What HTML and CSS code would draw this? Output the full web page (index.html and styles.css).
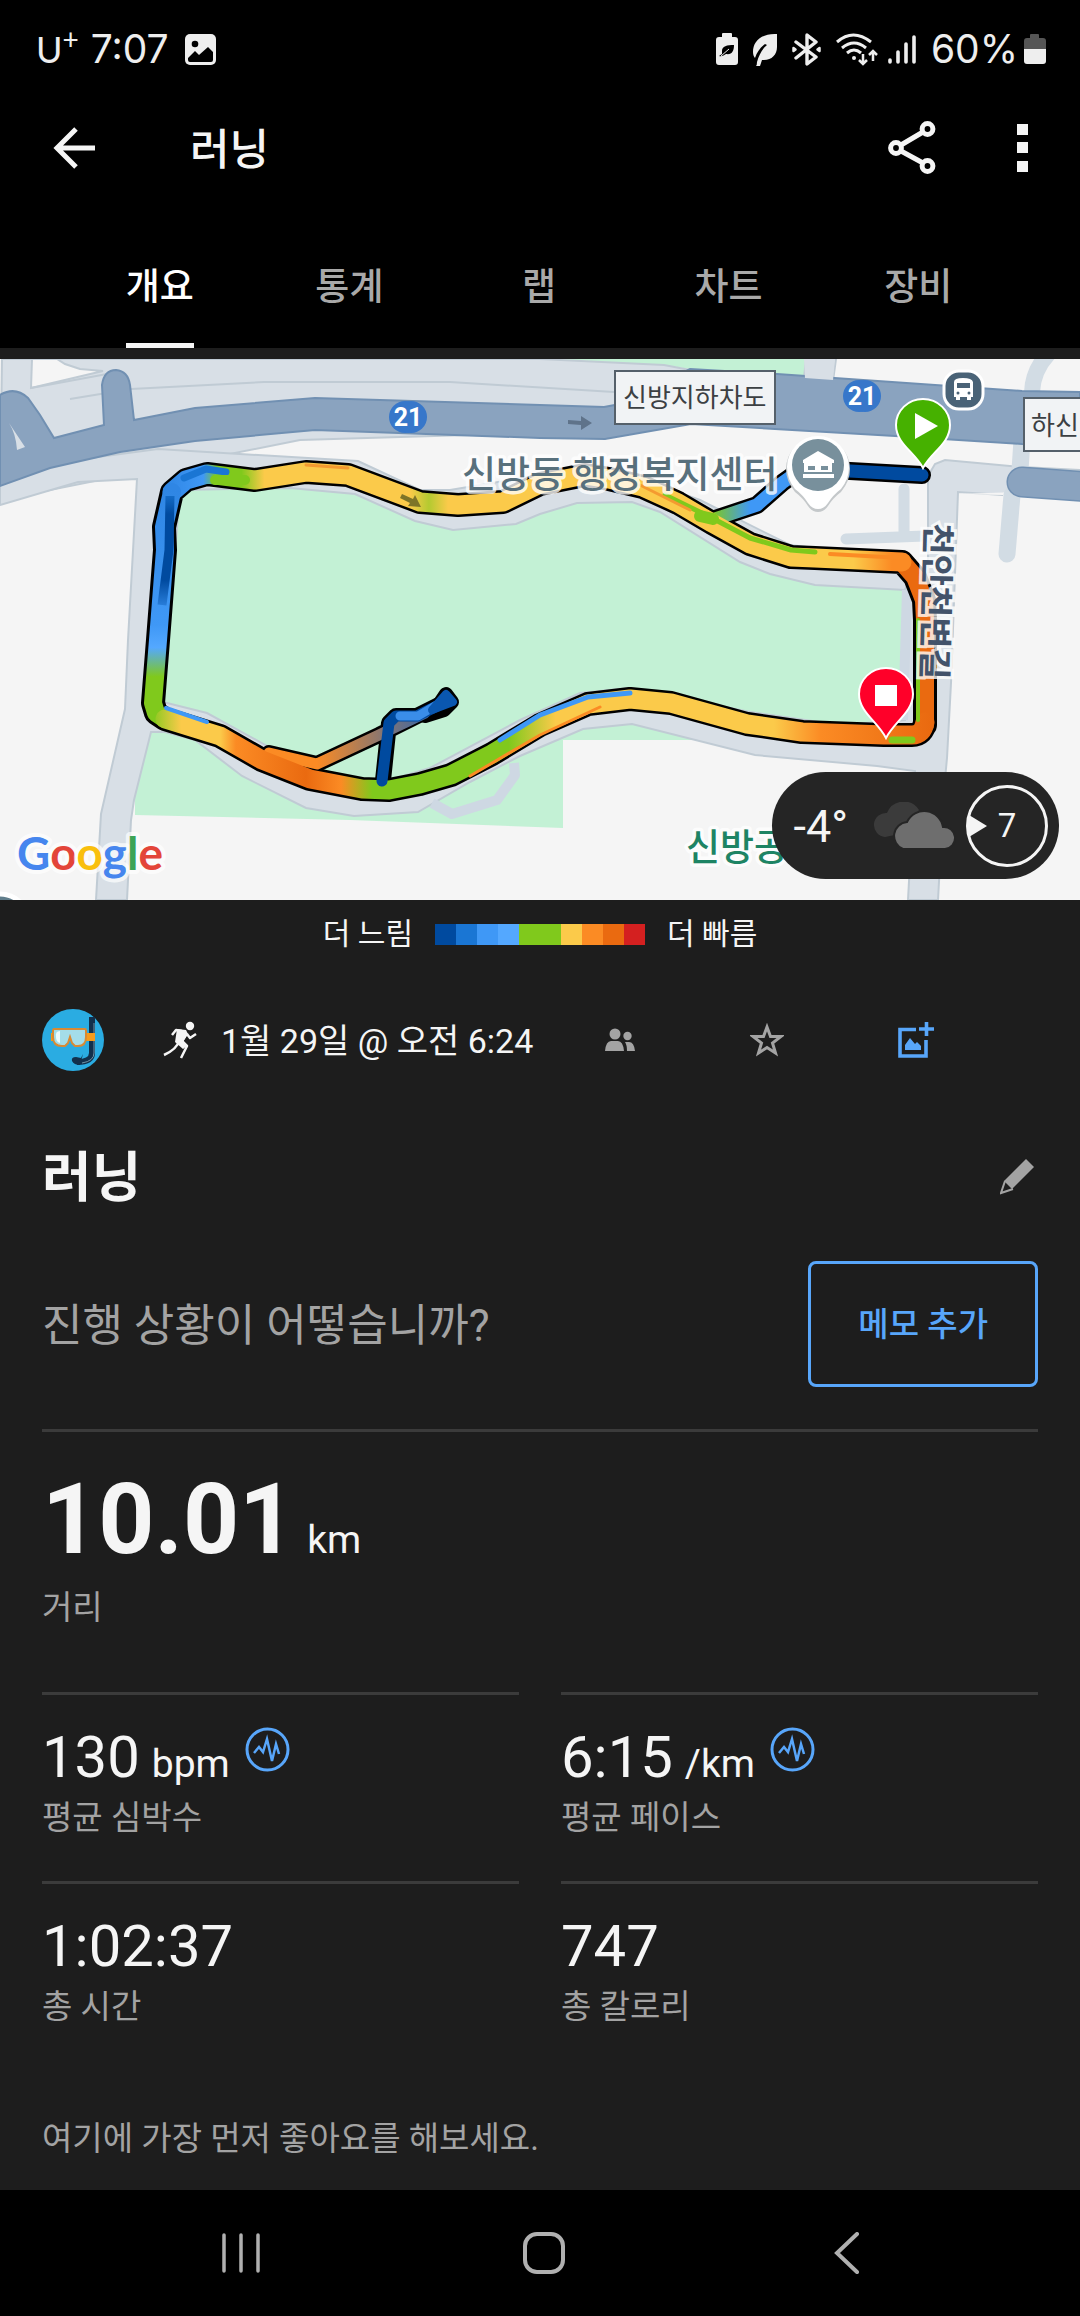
FILE: index.html
```html
<!DOCTYPE html>
<html lang="ko">
<head>
    <meta charset="UTF-8">
    <meta name="viewport" content="width=device-width, initial-scale=1.0">
    <title>러닝</title>
    <link rel="stylesheet" href="styles.css">
</head>
<body>
    <div class="screen">
        <div class="status-bar">
            <div class="status-left">
                <span class="carrier">U<sup>+</sup></span>
                <span>7:07</span>
                <svg class="status-photo" width="31" height="31" viewBox="0 0 31 31">
                    <rect width="31" height="31" rx="5" fill="#eee"/>
                    <circle cx="10" cy="10" r="3.3" fill="#000"/>
                    <path d="M3 24l7-7 4 4 9-8 5 5v8q0 2-2 2H5q-2 0-2-2z" fill="#000"/>
                </svg>
            </div>
            <div class="status-right">
                <svg width="22" height="33" viewBox="0 0 22 33">
                    <path d="M6 4V1q0-1 1-1h8q1 0 1 1v3h3q3 0 3 3v22q0 3-3 3H3q-3 0-3-3V7q0-3 3-3z" fill="#eee"/>
                    <path d="M18 12c-7 0-12 1-12 6l0 3-3 2c3 1 5-1 7-2 6 1 8-3 8-9z" fill="#000"/>
                    <path d="M5 23l8-7" stroke="#eee"/>
                </svg>
                <svg width="24" height="33" viewBox="0 0 24 33">
                    <path d="M24 1C9 0 0 8 0 19c0 3 1 5 2 6 2-6 5-10 10-14l2 1c-5 4-8 10-10 17q0 3-1 4l4 0 2-6c9 1 15-5 15-13z" fill="#eee"/>
                </svg>
                <svg width="29" height="33" viewBox="0 0 29 33" fill="none" stroke="#eee" stroke-width="3.400" stroke-linejoin="round" stroke-linecap="round">
                    <path d="M4 9l20 15-9 7V2l9 7L4 25"/>
                    <path d="M1.500 15l2 1.500-2 1.500zM27.500 15l-2 1.500 2 1.500z" stroke-width="2.500"/>
                </svg>
                <svg class="wifi" width="42" height="33" viewBox="0 0 42 33" fill="none" stroke="#eee" stroke-width="3">
                    <path d="M1 9Q17-5 35 9M6 15q12-10 24 0M11 20q7-6 14 0"/>
                    <circle cx="18" cy="25" r="2" fill="#eee" stroke="none"/>
                    <path d="M27 21v9M23 27l4 4 4-4M37 28v-9M33 22l4-4 4 4" stroke-width="2.500"/>
                </svg>
                <svg width="28" height="33" viewBox="0 0 28 33" stroke="#eee" stroke-width="3.600" stroke-linecap="round">
                    <path d="M2 27v2M10 19v10M18 11v18M26 4v25"/>
                </svg>
                <span class="percent">60%</span>
                <svg width="22" height="33" viewBox="0 0 22 33">
                    <path d="M6 5V2q0-1 1-1h7q1 0 1 1v3h4q3 0 3 3v8H0V8q0-3 3-3z" fill="#555"/>
                    <path d="M0 16h22v12q0 3-3 3H3q-3 0-3-3z" fill="#eee"/>
                </svg>
            </div>
        </div>

        <header class="app-bar">
            <button class="icon-btn" aria-label="뒤로">
                <svg width="42" height="42" viewBox="0 0 42 42" fill="none" stroke="#f5f5f5" stroke-width="5">
                    <path d="M23 2L4 21l19 19M4 21h38"/>
                </svg>
            </button>
            <h1>러닝</h1>
            <button class="icon-btn share" aria-label="공유">
                <svg width="48" height="54" viewBox="0 0 48 54" fill="none" stroke="#f5f5f5" stroke-width="5">
                    <circle cx="8" cy="27" r="5.400"/>
                    <circle cx="39.500" cy="8" r="5.400"/>
                    <circle cx="39.500" cy="45" r="5.400"/>
                    <path d="M13 24l22-13M13 30l22 12"/>
                </svg>
            </button>
            <button class="icon-btn" aria-label="더보기">
                <svg width="12" height="48" viewBox="0 0 12 48" fill="#f5f5f5">
                    <path d="M0 0h11v11H0zM0 18h11v11H0zM0 37h11v11H0z"/>
                </svg>
            </button>
        </header>

        <nav class="tabs">
            <a href="#" class="tab active">개요</a>
            <a href="#" class="tab">통계</a>
            <a href="#" class="tab">랩</a>
            <a href="#" class="tab">차트</a>
            <a href="#" class="tab">장비</a>
        </nav>

        <div class="map">
            <svg class="map-canvas" viewBox="0 359 1080 541">
                <defs>
                    <linearGradient id="gTop" gradientUnits="userSpaceOnUse" x1="165" y1="0" x2="930" y2="0">
                        <stop offset="0" stop-color="#2f86e4"/>
                        <stop offset="0.050" stop-color="#3f98f6"/>
                        <stop offset="0.070" stop-color="#80c91c"/>
                        <stop offset="0.100" stop-color="#80c91c"/>
                        <stop offset="0.130" stop-color="#fbca4a"/>
                        <stop offset="0.320" stop-color="#fbca4a"/>
                        <stop offset="0.345" stop-color="#b4ca30"/>
                        <stop offset="0.370" stop-color="#fbca4a"/>
                        <stop offset="0.900" stop-color="#fbca4a"/>
                        <stop offset="0.950" stop-color="#fb8b24"/>
                        <stop offset="1" stop-color="#fb8b24"/>
                    </linearGradient>
                    <linearGradient id="gLeft" gradientUnits="userSpaceOnUse" x1="0" y1="490" x2="0" y2="715">
                        <stop offset="0" stop-color="#2f86e4"/>
                        <stop offset="0.600" stop-color="#3f98f6"/>
                        <stop offset="0.700" stop-color="#54a8ff"/>
                        <stop offset="0.830" stop-color="#80c91c"/>
                        <stop offset="1" stop-color="#80c91c"/>
                    </linearGradient>
                    <linearGradient id="gInner" gradientUnits="userSpaceOnUse" x1="0" y1="490" x2="0" y2="610">
                        <stop offset="0" stop-color="#1a76d4"/>
                        <stop offset="0.200" stop-color="#004a9f"/>
                        <stop offset="0.750" stop-color="#004a9f"/>
                        <stop offset="1" stop-color="#2f86e4"/>
                    </linearGradient>
                    <linearGradient id="gBottom" gradientUnits="userSpaceOnUse" x1="150" y1="0" x2="930" y2="0">
                        <stop offset="0" stop-color="#80c91c"/>
                        <stop offset="0.040" stop-color="#fbca4a"/>
                        <stop offset="0.090" stop-color="#fbca4a"/>
                        <stop offset="0.110" stop-color="#fb8b24"/>
                        <stop offset="0.200" stop-color="#ea6a10"/>
                        <stop offset="0.245" stop-color="#fb8b24"/>
                        <stop offset="0.285" stop-color="#80c91c"/>
                        <stop offset="0.460" stop-color="#80c91c"/>
                        <stop offset="0.520" stop-color="#fbca4a"/>
                        <stop offset="0.800" stop-color="#fbca4a"/>
                        <stop offset="0.860" stop-color="#fb8b24"/>
                        <stop offset="1" stop-color="#ea6a10"/>
                    </linearGradient>
                    <linearGradient id="gStart" gradientUnits="userSpaceOnUse" x1="712" y1="0" x2="840" y2="0">
                        <stop offset="0" stop-color="#80c91c"/>
                        <stop offset="0.300" stop-color="#3f98f6"/>
                        <stop offset="0.600" stop-color="#3f98f6"/>
                        <stop offset="1" stop-color="#004a9f"/>
                    </linearGradient>
                    <linearGradient id="gSpur" gradientUnits="userSpaceOnUse" x1="317" y1="0" x2="420" y2="0">
                        <stop offset="0" stop-color="#fb8b24"/>
                        <stop offset="1" stop-color="#46699c"/>
                    </linearGradient>
                </defs>
                <rect y="359" width="1080" height="541" fill="#f5f5f5"/>

                <!-- park -->
                <path d="M555 359H806V380L690 369 664 365Z" fill="#c3f1d5"/>
                <path d="M165 484L300 480 450 520 640 490 790 570 935 585V740H563V828L350 820 135 815V732L150 650Z" fill="#c3f1d5"/>

                <!-- local roads -->
                <g fill="#d8dfe6" stroke="#c0cbd4" stroke-width="2">
                    <path d="M2 359H540L664 365 690 370 640 430 300 440 0 500Z"/>
                    <path d="M32 359H57L65 364 80 369 103 371 31 388Z" fill="#f5f5f5"/>
                    <path d="M0 505L78 482 137 479 128 640 125 709 101 814 96 900H127L131 820 134 800 151 732 165 732 195 740 242 776 306 808 354 816 418 812 470 782 520 756 583 729 632 724 755 755 877 766 915 771 908 900H938L944 790 947 758 951 683 958 492 1003 495 1080 500V470L1022 467 945 460 935 464 928 476 928 600 905 590V720L840 725 750 712 630 688 580 693 520 720 430 768 380 783 310 770 260 742 207 713 163 702 180 490 290 488 355 494 415 521 453 530 516 524 540 514 577 503 632 502 660 512 740 562 770 574 815 585 905 590 915 560 790 545 700 500 600 465 450 490 420 490 358 461 158 449 0 470Z"/>
                    <path d="M806 359H836L833 381 804 378Z"/>
                </g>
                <path d="M958 494L1003 495V900H1080V500L1020 492Z" fill="#f5f5f5"/>
                <path d="M70 399L131 389 264 382 450 382 614 392M31 388L118 372" fill="none" stroke="#c0cbd4" stroke-width="2"/>
                <g fill="none" stroke="#d2dce4" stroke-linecap="round" stroke-linejoin="round">
                    <path d="M904 489V532M846 539L925 536" stroke-width="11"/>
                    <path d="M1012 495L1007 554M1022 440L1020 470" stroke-width="17"/>
                    <path d="M1049 353Q1033 370 1032 392" stroke-width="16"/>
                    <path d="M907 590L903 720M432 803L452 814 497 800 515 775 514 763" stroke="#ced8e3" stroke-width="10" stroke-linecap="butt"/>
                </g>

                <!-- route 21 -->
                <path d="M0 395Q15 386 28 398L40 415 54 438 104 425 102 385Q104 370 116 370 128 371 130 385L134 420 195 408 315 398 540 405 604 407 620 404 690 369 777 374 1022 391 1080 392V446L1022 444 895 436 691 424 605 439 540 438 315 430 195 441 120 452 50 468 0 486Z" fill="#8aa3bf" stroke="#7190b2" stroke-width="2"/>
                <path d="M9 423L25 447 17 450Q16 434 9 423Z" fill="#d8dfe6"/>
                <path d="M804 359H835L833 380 805 378Z" fill="#d8dfe6"/>
                <path d="M1022 482L1090 487" stroke="#7190b2" stroke-width="31" stroke-linecap="round"/>
                <path d="M1022 482L1090 487" stroke="#8aa3bf" stroke-width="28" stroke-linecap="round"/>
                <path d="M568 420L581 421V416L592 423 581 430V425L568 424Z" fill="#5f738a"/>

                <!-- recorded track -->
                <g fill="none" stroke-linejoin="round" stroke-linecap="round">
                    <path d="M922 475L850 471 803 468 782 483 757 505 712 520" stroke="#000" stroke-width="18"/>
                    <path d="M269 753L317 764 379 735 445 702 417 716 396 716 389 723 382 790" stroke="#000" stroke-width="16"/>
                    <path d="M425 716L440 703 446 694 452 702 444 710Z" stroke="#000" stroke-width="14"/>
                    <path d="M925 725V620L924 600 915 577 902 562 815 558 791 557 750 544 712 523 678 503 643 487 609 479 585 475 540 484 503 502 458 505 420 502 348 475 306 472 255 480 207 474 186 480 172 492 164 527 165 550 158 640 153 703 156 713 165 719 220 736 262 760 310 779 362 789 389 790 420 784 451 775 492 754 540 725 588 704 630 699 671 703 747 724 802 732 884 735 912 735Q923 735 925 722" stroke="#000" stroke-width="24"/>
                    <path d="M922 475L850 471 803 468 782 483 757 505 712 520" stroke="url(#gStart)" stroke-width="13"/>
                    <path d="M269 753L317 764 379 735 425 713" stroke="url(#gSpur)" stroke-width="11"/>
                    <path d="M925 725V620L924 600 915 577 902 562" stroke="#ea6a10" stroke-width="18"/>
                    <path d="M902 562L815 558 791 557 750 544 712 523 678 503 643 487 609 479 585 475 540 484 503 502 458 505 420 502 348 475 306 472 255 480 207 474 186 480 172 492" stroke="url(#gTop)" stroke-width="19"/>
                    <path d="M172 492L164 527 165 550 158 640 153 703 156 713 165 719" stroke="url(#gLeft)" stroke-width="18"/>
                    <path d="M165 719L220 736 262 760 310 779 362 789 389 790 420 784 451 775 492 754 540 725 588 704 630 699 671 703 747 724 802 732 884 735 912 735Q923 735 925 722" stroke="url(#gBottom)" stroke-width="19"/>
                    <!-- other laps -->
                    <path d="M170 496L169 550 162 605" stroke="url(#gInner)" stroke-width="9" stroke-linecap="butt"/>
                    <path d="M184 478L206 469 226 472" stroke="#1a76d4" stroke-width="7"/>
                    <path d="M215 480L245 480" stroke="#80c91c" stroke-width="10"/>
                    <path d="M665 495L710 517 750 538 791 550 815 552" stroke="#80c91c" stroke-width="5"/>
                    <path d="M700 516L713 519" stroke="#80c91c" stroke-width="12"/>
                    <path d="M830 554L902 558" stroke="#fb8b24" stroke-width="4"/>
                    <path d="M640 485L690 510M306 465L348 468" stroke="#f49a30" stroke-width="3"/>
                    <path d="M166 708L207 722" stroke="#3f98f6" stroke-width="4"/>
                    <path d="M500 740L540 715 588 697 630 693" stroke="#3f98f6" stroke-width="5"/>
                    <path d="M470 776L540 735 600 707" stroke="#fb8b24" stroke-width="3"/>
                    <path d="M918 720V620" stroke="#80c91c" stroke-width="4"/>
                    <path d="M892 740H912" stroke="#80c91c" stroke-width="7"/>
                    <path d="M445 702L417 716 396 716 389 723 382 781" stroke="#004a9f" stroke-width="11"/>
                    <path d="M400 716L418 716 440 703" stroke="#3a8de9" stroke-width="9"/>
                    <path d="M432 710L446 694 453 702Z" fill="#0a57b0" stroke="#0a57b0" stroke-width="8"/>
                </g>
                <path d="M402 494L413 499 415 495 421 507 408 506 410 503 400 498Z" fill="#7d7428"/>

                <!-- labels -->
                <g fill="#f1f3f5" stroke="#55606a" stroke-width="2">
                    <rect x="615" y="371" width="160" height="53"/>
                    <rect x="1024" y="398" width="80" height="53"/>
                </g>
                <text class="tunnel" x="623" y="407">신방지하차도</text>
                <text class="tunnel" x="1031" y="435">하신</text>
                <circle cx="405" cy="417" r="16" fill="#3777ca"/><circle cx="411" cy="417" r="16" fill="#3777ca"/>
                <circle cx="859" cy="396" r="16" fill="#3777ca"/><circle cx="865" cy="396" r="16" fill="#3777ca"/>
                <text class="shield" x="408" y="426">21</text>
                <text class="shield" x="862" y="405">21</text>
                <text class="poi" x="462" y="488">신방동 행정복지센터</text>
                <text class="poi park" x="686" y="861">신방공원</text>
                <text class="street" transform="translate(926 523) rotate(91.500)">천안천변길</text>

                <!-- civic centre pin -->
                <path d="M818 512Q812 512 808 506 803 498 795 492 786 481 786 469A32 32 0 0 1 850 469Q850 481 841 492 833 498 828 506 824 512 818 512Z" fill="#c4c8ca"/>
                <path d="M818 509Q812 509 808 503 803 495 795 489 787 479 787 467A31 31 0 0 1 849 467Q849 479 841 489 833 495 828 503 824 509 818 509Z" fill="#fff"/>
                <circle cx="818" cy="465" r="26" fill="#78909c"/>
                <path d="M803 460L818 451 834 460V463H803ZM804 463H832V472H804ZM803 474H834V478H803Z" fill="#fff"/>
                <path d="M808 466H815V470H808ZM821 466H828V470H821Z" fill="#78909c"/>

                <!-- bus stop -->
                <rect x="944" y="371" width="39" height="38" rx="15" fill="#4a6377" stroke="#fff" stroke-width="3"/>
                <path d="M954 382Q954 378 963 378T973 382V397H971V400H967V397H960V400H956V397H954Z" fill="#fff"/>
                <path d="M957 383H970V388H957Z" fill="#4a6377"/>
                <circle cx="958" cy="393" r="1.500" fill="#4a6377"/><circle cx="969" cy="393" r="1.500" fill="#4a6377"/>

                <!-- start and finish -->
                <path d="M923 468C915 452 896 444 896 425A27 26 0 0 1 950 425C950 444 931 452 923 468Z" fill="#46b100" stroke="#fff" stroke-width="2"/>
                <path d="M915 413L938 426 915 439Z" fill="#fff"/>
                <path d="M886 738C878 722 859 712 859 694A27 26 0 0 1 913 694C913 712 894 722 886 738Z" fill="#ff0029" stroke="#fff" stroke-width="2"/>
                <path d="M875 685H897V706H875Z" fill="#fff"/>

                <circle cx="0" cy="923" r="29" fill="#607d8b" stroke="#fff" stroke-width="5"/>
                <text class="google" x="17" y="870"><tspan fill="#4686ee">G</tspan><tspan fill="#e34539">o</tspan><tspan fill="#f9bf0d">o</tspan><tspan fill="#4686ee">g</tspan><tspan fill="#3da456">l</tspan><tspan fill="#e34539">e</tspan></text>
            </svg>

            <div class="weather">
                <span class="temp">-4°</span>
                <svg width="83" height="48" viewBox="0 0 83 48">
                    <path d="M12 35A12 12 0 0 1 14 11 18 18 0 0 1 46 8L36 30Z" fill="#3b3b3b"/>
                    <path d="M30 47A14 14 0 0 1 34 20 19 19 0 0 1 70 25 11 11 0 0 1 72 47Z" fill="#6e6e6e" stroke="#252525" stroke-width="2"/>
                </svg>
                <span class="wind">
                    <svg width="82" height="84" viewBox="0 0 82 84">
                        <circle cx="41" cy="42" r="39.500" fill="none" stroke="#f5f5f5" stroke-width="3"/>
                        <path d="M3 31L21 42 3 53Z" fill="#f5f5f5"/>
                    </svg>
                    <span class="wind-speed">7</span>
                </span>
            </div>
        </div>

        <div class="legend">
            <span>더 느림</span>
            <span class="scale">
                <i class="pace-1"></i><i class="pace-2"></i><i class="pace-3"></i><i class="pace-4"></i><i class="pace-5"></i><i class="pace-5"></i><i class="pace-6"></i><i class="pace-7"></i><i class="pace-8"></i><i class="pace-9"></i>
            </span>
            <span>더 빠름</span>
        </div>

        <main class="content">
            <div class="info">
                <svg class="avatar" width="62" height="62" viewBox="0 0 62 62">
                    <circle cx="31" cy="31" r="31" fill="#2aace2"/>
                    <path d="M50 8v36q0 9-15 9" fill="none" stroke="#12304c" stroke-width="6"/>
                    <path d="M52 14v30q0 8-12 10" fill="none" stroke="#7195a8"/>
                    <path d="M41 45l-2 4-5-1q-5 0-4 4 2 4 8 4z" fill="#12304c"/>
                    <path d="M9 24h44v8H9z" fill="#f59b1c"/>
                    <path d="M12 20h31q1 0 1 2v6q0 9-8 9h-3l-3-3-2-6-2 6-3 3h-3q-9 0-9-9v-6q0-2 1-2z" fill="#a4dde9" stroke="#d88a34" stroke-width="2"/>
                    <path d="M18 22q-5 0-4 6 0 5 4 6z" fill="#eafcff"/>
                </svg>
                <svg class="runner" width="34" height="38" viewBox="0 0 34 38">
                    <circle cx="27" cy="5" r="4.200" fill="#f5f5f5"/>
                    <path d="M24 12L19 20 24 25 18 37M24 13l3 4 6-4M19 10l-6-1-4 5M16 20q-2 8-15 14" fill="none" stroke="#f5f5f5" stroke-width="2.500" stroke-linejoin="round"/>
                    <path d="M14 8l9 1 2 4-5 8 4 4-4 3-8-7z" fill="#f5f5f5"/>
                </svg>
                <span class="date">1월 29일 @ 오전 6:24</span>
                <button class="icon-btn people" aria-label="공개 범위">
                    <svg width="30" height="24" viewBox="0 0 30 24" fill="#a3a3a3">
                        <circle cx="10" cy="6" r="5.500"/><circle cx="22.500" cy="8" r="4.200"/>
                        <path d="M0 23Q1 13 6 13h7q5 0 6 10zM20 14h4q5 0 6 9h-8q0-6-2-9z"/>
                    </svg>
                </button>
                <button class="icon-btn star" aria-label="즐겨찾기">
                    <svg width="34" height="34" viewBox="0 0 34 34" fill="none" stroke="#a3a3a3" stroke-width="3">
                        <path d="M17 4l3.500 9.500H31l-8.500 6.500 3 10-8.500-5.500L8.500 30l3-10L3 13.500h10.500z"/>
                    </svg>
                </button>
                <button class="icon-btn" aria-label="사진 추가">
                    <svg width="36" height="36" viewBox="0 0 36 36">
                        <path d="M18 7.500H2V34H28V18" fill="none" stroke="#58a6fa" stroke-width="3.600"/>
                        <path d="M28.500 0v14M21 7h15" stroke="#58a6fa" stroke-width="3.600"/>
                        <path d="M7 28v-5l5-7 5 6 2-2 4 4v4z" fill="#58a6fa"/>
                    </svg>
                </button>
            </div>

            <div class="title-row">
                <h2>러닝</h2>
                <button class="icon-btn" aria-label="이름 편집">
                    <svg width="38" height="36" viewBox="0 0 38 36">
                        <path d="M26 0l8 8-22 22-8-8z" fill="#a3a3a3"/>
                        <path d="M5 22L1 34l12-4" fill="none" stroke="#a3a3a3" stroke-width="2"/>
                    </svg>
                </button>
            </div>

            <div class="note-row">
                <p>진행 상황이 어떻습니까?</p>
                <button class="note-btn">메모 추가</button>
            </div>

            <section class="stat distance">
                <div class="value">10.01 <span class="unit">km</span></div>
                <div class="label">거리</div>
            </section>

            <section class="stats">
                <div class="stat">
                    <div class="value">130 <span class="unit">bpm</span>
                        <svg class="pulse" width="45" height="45" viewBox="0 0 45 45" fill="none" stroke="#58a6fa">
                            <circle cx="22.500" cy="22.500" r="20.500" stroke-width="3"/>
                            <path d="M9 26l5-6 4 5 4-13 5 22 4-17 3 10" stroke-width="2.500"/>
                        </svg>
                    </div>
                    <div class="label">평균 심박수</div>
                </div>
                <div class="stat">
                    <div class="value">6:15 <span class="unit">/km</span>
                        <svg class="pulse" width="45" height="45" viewBox="0 0 45 45" fill="none" stroke="#58a6fa">
                            <circle cx="22.500" cy="22.500" r="20.500" stroke-width="3"/>
                            <path d="M9 26l5-6 4 5 4-13 5 22 4-17 3 10" stroke-width="2.500"/>
                        </svg>
                    </div>
                    <div class="label">평균 페이스</div>
                </div>
                <div class="stat">
                    <div class="value">1:02:37</div>
                    <div class="label">총 시간</div>
                </div>
                <div class="stat">
                    <div class="value">747</div>
                    <div class="label">총 칼로리</div>
                </div>
            </section>

            <p class="likes">여기에 가장 먼저 좋아요를 해보세요.</p>
        </main>

        <footer class="nav-bar">
            <button class="icon-btn" aria-label="최근 앱">
                <svg width="42" height="42" viewBox="0 0 42 42" stroke="#b0b0b0" stroke-width="3.500" stroke-linecap="round">
                    <path d="M4 3v36M21 3v36M38 3v36"/>
                </svg>
            </button>
            <button class="icon-btn" aria-label="홈">
                <svg width="42" height="42" viewBox="0 0 42 42" fill="none" stroke="#b0b0b0" stroke-width="4">
                    <rect x="2" y="2" width="38" height="38" rx="12"/>
                </svg>
            </button>
            <button class="icon-btn" aria-label="이전">
                <svg width="42" height="42" viewBox="0 0 42 42" fill="none" stroke="#b0b0b0" stroke-width="4" stroke-linecap="round">
                    <path d="M31 2L11 21l20 19"/>
                </svg>
            </button>
        </footer>
    </div>
</body>
</html>
```
FILE: styles.css
```css
* {
    box-sizing: border-box;
}
body {
    margin: 0;
    background: #1d1d1d;
    color: #f5f5f5;
    font-family: Roboto, "Noto Sans CJK KR", sans-serif;
}
h1, h2, p {
    margin: 0;
}
svg {
    display: block;
}
button {
    font-family: inherit;
    cursor: pointer;
}
.screen {
    display: flex;
    flex-direction: column;
    min-height: 100vh;
}
.icon-btn {
    background: none;
    border: 0;
    padding: 0;
}

/* status bar */
.status-bar {
    display: flex;
    justify-content: space-between;
    align-items: center;
    height: 98px;
    padding: 0 34px 0 36px;
    background: #000;
    color: #eee;
    font-family: Inter, sans-serif;
    font-size: 39px;
    line-height: 40px;
}
.status-left, .status-right {
    display: flex;
    align-items: center;
}
.status-left {
    gap: 12px;
}
.carrier {
    font-family: Lato, sans-serif;
    font-size: 36px;
}
.carrier sup {
    font-size: 28px;
    line-height: 0;
}
.status-photo {
    margin-left: 4px;
}
.status-right {
    gap: 15px;
}
.wifi {
    margin-right: -5px;
}
.percent {
    margin-right: -9px;
}

/* app bar */
.app-bar {
    display: flex;
    align-items: center;
    height: 100px;
    padding: 0 51px 0 53px;
    background: #000;
}
.app-bar h1 {
    flex: 1;
    margin-left: 95px;
    padding-top: 4px;
    font-size: 43px;
    line-height: 60px;
    font-weight: 500;
}
.share {
    margin-right: 81px;
}
.tabs {
    display: grid;
    grid-template-columns: repeat(5, 1fr);
    height: 150px;
    padding: 0 67px 0 65px;
    background: #000;
}
.tab {
    justify-self: center;
    padding-top: 64px;
    border-bottom: 5px solid transparent;
    color: #a9a9a9;
    font-size: 37px;
    font-weight: 500;
    line-height: 52px;
    text-decoration: none;
}
.tab.active {
    color: #fff;
    border-bottom-color: #f5f5f5;
}

/* map */
.map {
    position: relative;
    margin-top: 11px;
}
.map-canvas {
    width: 100%;
    height: auto;
}
.tunnel {
    font-size: 26px;
    fill: #3c4043;
}
.shield {
    font-size: 25px;
    font-weight: 700;
    fill: #fff;
    text-anchor: middle;
}
.poi {
    font-size: 37px;
    font-weight: 500;
    fill: #58707c;
    stroke: rgba(255, 255, 255, 0.8);
    stroke-width: 7px;
    stroke-linejoin: round;
    paint-order: stroke;
}
.poi.park {
    fill: #1e8464;
}
.street {
    font-size: 34px;
    font-weight: 700;
    fill: #43536a;
    stroke: rgba(255, 255, 255, 0.8);
    stroke-width: 6px;
    paint-order: stroke;
}
.google {
    font-family: Lato, sans-serif;
    font-size: 46px;
    font-weight: 700;
    stroke: rgba(255, 255, 255, 0.7);
    stroke-width: 8px;
    stroke-linejoin: round;
    paint-order: stroke;
}
.weather {
    position: absolute;
    right: 21px;
    bottom: 21px;
    display: flex;
    align-items: center;
    height: 107px;
    padding: 0 11px 0 21px;
    border-radius: 54px;
    background: #252525;
}
.temp {
    margin-right: 25px;
    padding-top: 3px;
    font-size: 45px;
    line-height: 54px;
}
.wind {
    position: relative;
    margin-left: 10px;
}
.wind-speed {
    position: absolute;
    inset: 0;
    font-size: 33px;
    line-height: 84px;
    text-align: center;
}

/* pace legend */
.legend {
    display: flex;
    justify-content: center;
    align-items: center;
    gap: 22px;
    height: 68px;
    font-size: 30px;
    line-height: 40px;
}
.scale {
    display: flex;
}
.scale i {
    width: 21px;
    height: 21px;
}
.pace-1 { background: #004a9f; }
.pace-2 { background: #1a76d4; }
.pace-3 { background: #3f98f6; }
.pace-4 { background: #54a8ff; }
.pace-5 { background: #80c91c; }
.pace-6 { background: #fbca4a; }
.pace-7 { background: #fb8b24; }
.pace-8 { background: #ea6a10; }
.pace-9 { background: #d42020; }

/* activity */
.content {
    padding: 0 42px;
}
.info {
    display: flex;
    align-items: center;
    height: 144px;
}
.runner {
    margin: 0 24px 0 59px;
}
.date {
    padding-top: 2px;
    font-size: 34px;
    line-height: 40px;
}
.people {
    margin: 0 115px 0 72px;
}
.star {
    margin-right: 114px;
}
.title-row {
    display: flex;
    justify-content: space-between;
    align-items: center;
    height: 130px;
}
h2 {
    padding-top: 4px;
    font-size: 54px;
    line-height: 60px;
    font-weight: 700;
}
.note-row {
    display: flex;
    justify-content: space-between;
    align-items: center;
    padding: 19px 0 42px;
}
.note-row p {
    padding-top: 4px;
    color: #a3a3a3;
    font-size: 44px;
    line-height: 60px;
}
.note-btn {
    padding: 41px 47px 39px;
    border: 3px solid #58a6fa;
    border-radius: 8px;
    background: none;
    color: #58a6fa;
    font-size: 33px;
    font-weight: 500;
    line-height: 40px;
}
.stats {
    display: grid;
    grid-template-columns: 1fr 1fr;
    column-gap: 42px;
}
.stat {
    padding: 32px 0 43px;
    border-top: 3px solid #3b3b3b;
}
.value {
    display: flex;
    align-items: baseline;
    gap: 12px;
    font-size: 58px;
    line-height: 60px;
}
.unit {
    font-size: 39px;
    line-height: 40px;
}
.pulse {
    align-self: flex-start;
    margin-left: 3px;
}
.label {
    margin-top: 11px;
    color: #a3a3a3;
    font-size: 33px;
    line-height: 40px;
}
.distance {
    padding: 38px 0 64px;
}
.distance .value {
    font-size: 98px;
    font-weight: 700;
    line-height: 100px;
}
.distance .unit {
    font-weight: 400;
}
.distance .label {
    margin-top: 18px;
}
.likes {
    padding: 49px 0 31px;
    color: #a3a3a3;
    font-size: 33px;
    line-height: 40px;
}

/* system buttons */
.nav-bar {
    display: flex;
    justify-content: space-between;
    align-items: center;
    height: 126px;
    margin-top: auto;
    padding: 0 212px 0 220px;
    background: #000;
}
```
